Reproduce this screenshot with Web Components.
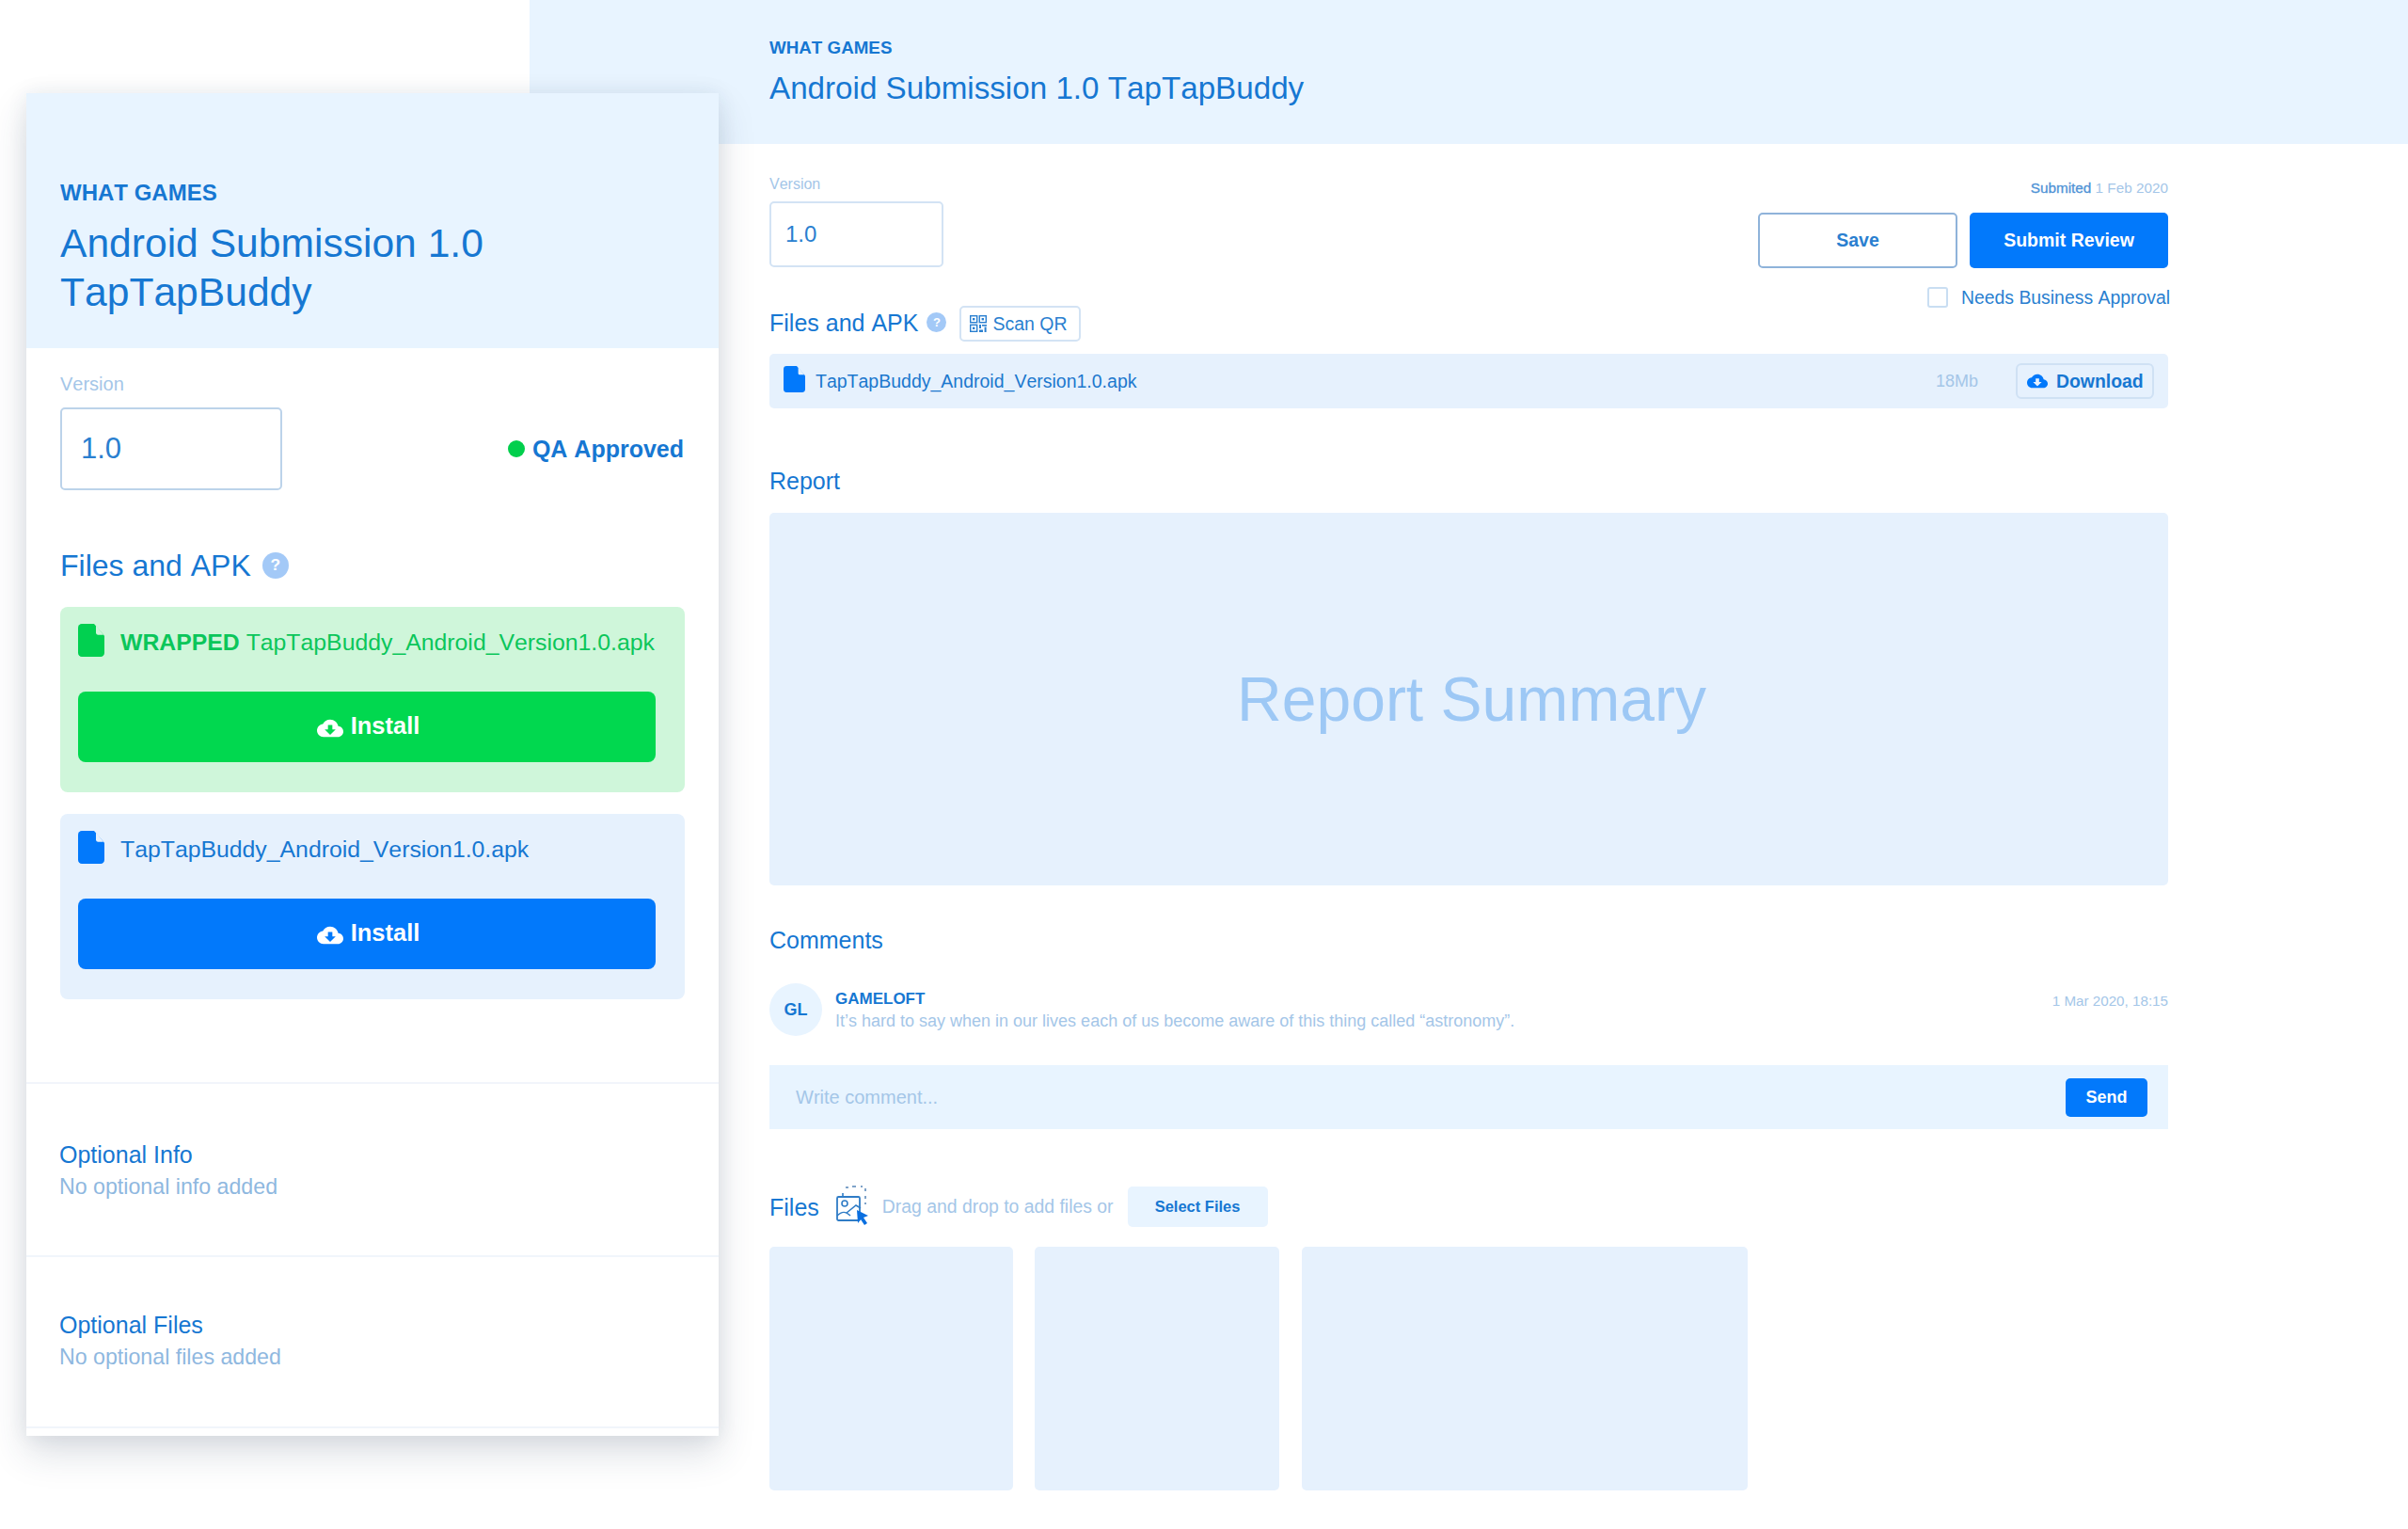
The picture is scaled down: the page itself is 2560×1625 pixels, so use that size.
<!DOCTYPE html>
<html lang="en"><head><meta charset="utf-8"><title>Android Submission</title>
<style>
html,body{margin:0;padding:0;background:#fff}
body{font-family:"Liberation Sans",Arial,sans-serif;font-kerning:none;color:#1677d2;width:2560px;height:1625px;overflow:hidden;position:relative}
</style></head><body>
<main-screen></main-screen>
<side-panel></side-panel>
<script>
const ICONS={
 cloud:'<path d="M19.35 10.04C18.67 6.59 15.64 4 12 4 9.11 4 6.6 5.64 5.35 8.04 2.34 8.36 0 10.91 0 14c0 3.31 2.69 6 6 6h13c2.76 0 5-2.24 5-5 0-2.64-2.05-4.78-4.65-4.96zM17 13l-5 5-5-5h3V9h4v4h3z" fill="currentColor" fill-rule="evenodd"/>'
};
function def(name,html,init){
  customElements.define(name,class extends HTMLElement{
    constructor(){super();this.attachShadow({mode:'open'}).innerHTML=html;}
    connectedCallback(){
      if(this._done)return;this._done=true;
      if(init)init(this);
    }
  });
}
function fileIconSVG(c,f){return `<svg viewBox="0 0 28 33" width="100%" height="100%" preserveAspectRatio="none" style="display:block"><path d="M4 0H17L28 12V29a4 4 0 0 1-4 4H4a4 4 0 0 1-4-4V4a4 4 0 0 1 4-4Z" fill="${c}"/><path d="M19 1.5 27 11H21a2 2 0 0 1-2-2Z" fill="${f}"/></svg>`;}

def('file-icon',`<style>:host{display:block;flex:none;width:var(--w,28px);height:var(--h,35px)}</style><span id="s" style="display:block;width:100%;height:100%"></span>`,
  el=>{el.shadowRoot.getElementById('s').innerHTML=fileIconSVG(el.getAttribute('color')||'#0279fb',el.getAttribute('fold')||'#e6f1fd');});

def('cloud-icon',`<style>:host{display:inline-block;flex:none;width:var(--s,28px);height:var(--s,28px)}svg{display:block;width:100%;height:100%}</style><svg viewBox="0 0 24 24">${ICONS.cloud}</svg>`);

def('help-icon',`<style>:host{display:inline-flex;flex:none;align-items:center;justify-content:center;width:var(--s,28px);height:var(--s,28px);border-radius:50%;background:#a3c9f7;color:#fff;font-weight:700;font-size:calc(var(--s,28px)*.62);line-height:1}</style>?`);

def('qr-icon',`<style>:host{display:inline-block;flex:none;width:18px;height:18px}svg{display:block;width:100%;height:100%}</style>
<svg viewBox="0 0 18 18" fill="none" stroke="#2a7fd0" stroke-width="1.4"><rect x=".7" y=".7" width="7" height="7"/><rect x="10.3" y=".7" width="7" height="7"/><rect x=".7" y="10.3" width="7" height="7"/><g fill="#2a7fd0" stroke="none"><rect x="3" y="3" width="2.4" height="2.4"/><rect x="12.6" y="3" width="2.4" height="2.4"/><rect x="3" y="12.6" width="2.4" height="2.4"/><rect x="10" y="10" width="2" height="4"/><rect x="13" y="10" width="5" height="1.6"/><rect x="15.6" y="12.5" width="2" height="5.5"/><rect x="10" y="15.5" width="4" height="2.5"/></g></svg>`);

def('drop-icon',`<style>:host{display:inline-block;flex:none;width:36px;height:44px}svg{display:block;width:100%;height:100%}</style>
<svg viewBox="0 0 36 44" fill="none"><path d="M10 3h3M17 2h4M26 2h2M31 4v3M31 12v3M31 19v2" stroke="#7fa3c9" stroke-width="2"/><rect x="1" y="13" width="24" height="25" rx="1.5" stroke="#2f7cc6" stroke-width="1.8"/><path d="M7 13V9" stroke="#2f7cc6" stroke-width="1.6"/><circle cx="9" cy="20" r="3" stroke="#2f7cc6" stroke-width="1.6"/><path d="M1 33c5-5 9-5 14 0M11 30l10-8 5 3" stroke="#2f7cc6" stroke-width="1.6"/><path d="M22 27l12 6-5 2 4 6-3 2-4-6-3 4Z" fill="#0a6fe0"/></svg>`);

def('x-btn',`<style>
:host{display:flex;box-sizing:border-box;align-items:center;justify-content:center;gap:var(--gap,10px);font-weight:700;border-radius:var(--r,5px);height:var(--h,59px);width:var(--w,auto);font-size:var(--fs,19.5px);background:var(--bg,#0279fb);color:var(--fg,#fff);border:var(--bd,none);padding:var(--pad,0)}
</style><slot></slot>`);

def('page-head',`<style>
:host{display:block;background:#e8f4ff}
.k{font-weight:700;font-size:var(--ks,20px);line-height:var(--kl,20px);color:#1677d2}
.t{font-size:var(--ts,34px);line-height:var(--tl,1.2);margin-top:var(--tm,10px);color:#1677d2}
</style><div class="k"><slot name="kicker"></slot></div><div class="t"><slot name="title"></slot></div>`);

def('version-field',`<style>
:host{display:block}
.l{font-size:var(--ls,16px);line-height:1;color:#a4c6e8}
.i{box-sizing:border-box;display:flex;align-items:center;width:var(--w,185px);height:var(--h,70px);margin-top:var(--lm,10px);padding-left:var(--pl,15px);border:2px solid var(--bc,#d3e3f4);border-radius:5px;font-size:var(--fs,24px);color:#2a7fd0;background:#fff}
</style><div class="l">Version</div><div class="i">1.0</div>`);

def('section-title',`<style>:host{display:block;font-size:var(--fs,25px);line-height:1.2;color:#1677d2}</style><slot></slot>`);

def('install-card',`<style>
:host{display:block;box-sizing:border-box;height:197px;padding:18px 31px 0 19px;border-radius:8px;background:var(--card,#e6f1fd);color:var(--tx,#1677d2)}
.n{display:flex;align-items:center;gap:17px;font-size:24.8px;height:35px;white-space:nowrap}
.n span{margin-top:5px}
x-btn{--h:75px;--fs:25.5px;--r:8px;--bg:var(--btn,#0279fb);--fg:#fff;margin-top:37px;--gap:8px;--pad:0 0 3px 3px}
cloud-icon{--s:28px;margin-top:5px}
</style>
<div class="n"><file-icon id="f"></file-icon><span><slot></slot></span></div>
<x-btn><cloud-icon></cloud-icon><span>Install</span></x-btn>`,
 el=>{const f=el.shadowRoot.getElementById('f');f.shadowRoot.getElementById('s').innerHTML=fileIconSVG(el.getAttribute('icon')||'#0279fb',el.getAttribute('fold')||'#e6f1fd');});

def('info-block',`<style>
:host{display:block;box-sizing:border-box;border-top:2px solid #f1f5fb;padding-left:35px;padding-top:var(--pt,60px);height:var(--hh,184px)}
.a{font-size:25px;line-height:30px;color:#1677d2}
.b{font-size:23.2px;line-height:30px;margin-top:4px;color:#8fb8e0}
</style><div class="a"><slot name="a"></slot></div><div class="b"><slot name="b"></slot></div>`);

def('side-panel',`<style>
:host{display:block;position:absolute;left:28px;top:99px;width:736px;height:1427px;background:#fff;box-shadow:0 18px 36px rgba(40,60,90,.17),0 0 20px rgba(40,60,90,.08);overflow:hidden}
page-head{box-sizing:border-box;height:271px;padding:93px 0 0 36px;--ks:24px;--kl:25px;--ts:42.6px;--tl:52px;--tm:15px}
.body{padding:0 36px}
version-field{--ls:20px;--lm:15px;--w:236px;--h:88px;--pl:20px;--fs:31px;--bc:#bcd3ea}
.vr{display:flex;justify-content:space-between;align-items:flex-end;padding-top:28px;padding-right:1px}
.qa{display:flex;align-items:center;gap:8px;font-weight:700;font-size:25px;height:88px}
.dot{width:18px;height:18px;border-radius:50%;background:#01cf4c}
.fh{display:flex;align-items:center;gap:12px;margin-top:61px;height:38px;--fs:32px}
help-icon{--s:28px}
.cards{display:flex;flex-direction:column;gap:23px;margin-top:25px;width:664px}
.foot{margin-top:88px}
</style>
<page-head><span slot="kicker">WHAT GAMES</span><span slot="title">Android Submission 1.0<br>TapTapBuddy</span></page-head>
<div class="body">
 <div class="vr"><version-field></version-field><div class="qa"><span class="dot"></span><span>QA Approved</span></div></div>
 <div class="fh"><section-title>Files and APK</section-title><help-icon></help-icon></div>
 <div class="cards">
  <install-card icon="#01d050" fold="#cff6da" style="--card:#cff6da;--tx:#0bc65a;--btn:#01d84f"><b>WRAPPED</b> TapTapBuddy_Android_Version1.0.apk</install-card>
  <install-card>TapTapBuddy_Android_Version1.0.apk</install-card>
 </div>
</div>
<div class="foot">
 <info-block><span slot="a">Optional Info</span><span slot="b">No optional info added</span></info-block>
 <info-block style="--pt:57px;--hh:182px"><span slot="a">Optional Files</span><span slot="b">No optional files added</span></info-block>
 <info-block style="--hh:9px;--pt:0px"></info-block>
</div>`);

def('main-screen',`<style>
:host{display:block;margin-left:563px}
page-head{box-sizing:border-box;height:153px;padding:41px 0 0 255px;--ks:18.8px;--kl:20px;--ts:33.2px;--tl:42px;--tm:12px}
.c{width:1487px;margin-left:255px}
.top{display:flex;justify-content:space-between;height:223px;box-sizing:border-box;padding-top:35px}
.fh{display:flex;align-items:center;gap:9px;margin-top:41px;height:38px}
.fh section-title{margin-top:-3px}
.fh help-icon{margin-top:-3px}
help-icon{--s:21px}
.scan{display:flex;align-items:center;gap:6px;box-sizing:border-box;height:38px;width:129px;margin-left:5px;padding-left:9px;border:2px solid #d3e3f4;border-radius:5px;font-size:19.5px;color:#2a7fd0}
.r{display:flex;flex-direction:column;align-items:flex-end;margin-top:2px}
.sub{font-size:15.3px;line-height:20px;color:#a4c6e8}
.sub b{color:#4f93d6;font-weight:400;-webkit-text-stroke:.3px #4f93d6}
.btns{display:flex;gap:13px;margin-top:16px}
.check{display:flex;align-items:center;gap:14px;margin-top:20px;margin-right:-2px;font-size:19.4px;line-height:22px;color:#2a7fd0}
.box{box-sizing:border-box;width:22px;height:22px;border:2px solid #c9def2;border-radius:3px}
.row{display:flex;align-items:center;height:58px;border-radius:5px;background:#e6f1fd;padding:0 15px 0 15px;font-size:19.5px;color:#1c78ce}
.row file-icon{--w:23px;--h:28px;margin-right:11px;margin-top:-4px}
.row .sz{margin-left:auto;font-size:18px;color:#a4c6e8;margin-right:40px}
.dl{display:flex;align-items:center;gap:9px;box-sizing:border-box;width:147px;height:38px;padding-left:10px;border:2px solid #cfe1f4;border-radius:6px;font-weight:700;font-size:19.4px;color:#1677d2}
.dl cloud-icon{--s:22px;color:#0279fb}
.h{margin-top:62px}
.report{display:flex;align-items:center;justify-content:center;height:396px;margin-top:19px;border-radius:5px;background:#e6f1fd;font-size:66px;color:#9dc8f5}
.report span{margin-left:6px}
.ch{margin-top:43px}
.cm{display:flex;align-items:flex-start;height:56px;margin-top:31px}
.av{display:flex;align-items:center;justify-content:center;flex:none;width:56px;height:56px;border-radius:50%;background:#e8f4ff;font-size:18px;font-weight:700}
.who{margin-left:14px;flex:1}
.who b{display:block;font-size:17px;line-height:22px;margin-top:6px}
.who div{font-size:18px;line-height:22px;margin-top:1px;color:#a4c6e8}
.dt{font-size:15.2px;line-height:20px;margin-top:9px;color:#a4c6e8}
.inp{display:flex;align-items:center;justify-content:space-between;height:68px;margin-top:31px;background:#e8f4ff;padding:0 22px 0 28px;font-size:20px;color:#a4c6e8}
.inp x-btn{--h:41px;--w:87px;--fs:18px}
.fr{display:flex;align-items:center;height:43px;margin-top:61px}
.fr drop-icon{margin-left:18px;margin-right:13px;margin-top:-3px}
.fr .t{font-size:19.4px;color:#a4c6e8}
.fr x-btn{--h:43px;--w:149px;--fs:16.5px;--bg:#e8f4ff;--fg:#1677d2;margin-left:15px}
.th{display:grid;grid-template-columns:259px 259px 474px;gap:24px;margin-top:21px}
.th div{height:259px;border-radius:5px;background:#e6f1fd}
.th div:nth-child(2){margin-left:-1px}
</style>
<page-head><span slot="kicker">WHAT GAMES</span><span slot="title">Android Submission 1.0 TapTapBuddy</span></page-head>
<div class="c">
 <div class="top">
  <div>
   <version-field></version-field>
   <div class="fh"><section-title>Files and APK</section-title><help-icon></help-icon><div class="scan"><qr-icon></qr-icon><span>Scan QR</span></div></div>
  </div>
  <div class="r">
   <div class="sub"><b>Submited</b> 1 Feb 2020</div>
   <div class="btns">
    <x-btn style="--w:212px;--bg:#fff;--fg:#2a7fd0;--bd:2px solid #8fb3da">Save</x-btn>
    <x-btn style="--w:211px">Submit Review</x-btn>
   </div>
   <div class="check"><span class="box"></span><span>Needs Business Approval</span></div>
  </div>
 </div>
 <div class="row"><file-icon></file-icon><span>TapTapBuddy_Android_Version1.0.apk</span><span class="sz">18Mb</span><div class="dl"><cloud-icon></cloud-icon><span>Download</span></div></div>
 <section-title class="h">Report</section-title>
 <div class="report"><span>Report Summary</span></div>
 <section-title class="ch">Comments</section-title>
 <div class="cm"><div class="av">GL</div><div class="who"><b>GAMELOFT</b><div>It’s hard to say when in our lives each of us become aware of this thing called “astronomy”.</div></div><div class="dt">1 Mar 2020, 18:15</div></div>
 <div class="inp"><span>Write comment...</span><x-btn>Send</x-btn></div>
 <div class="fr"><section-title>Files</section-title><drop-icon></drop-icon><span class="t">Drag and drop to add files or</span><x-btn>Select Files</x-btn></div>
 <div class="th"><div></div><div></div><div></div></div>
</div>`);
</script>
</body></html>
